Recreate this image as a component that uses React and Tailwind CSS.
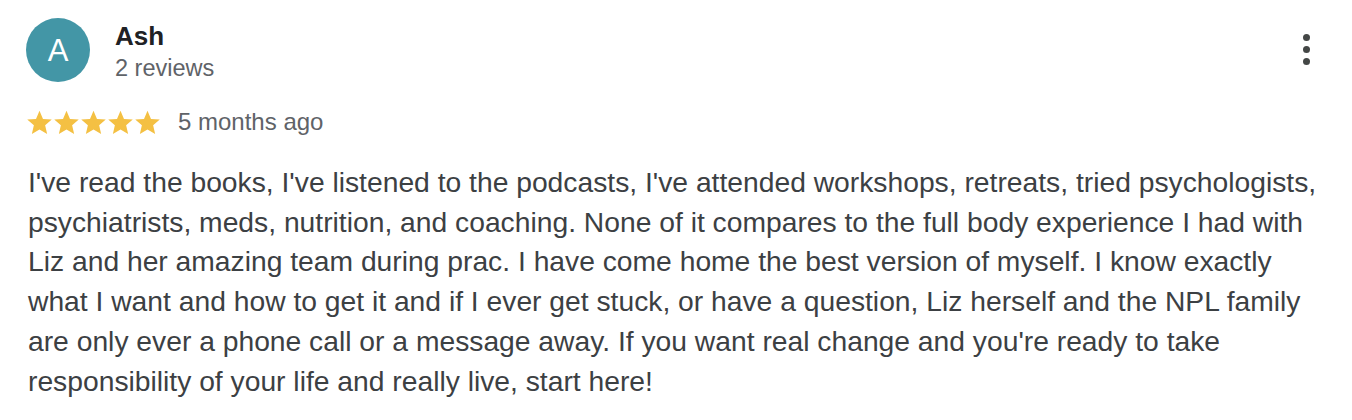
import React from 'react';

const Star = () => (
  <svg width="27" height="27" viewBox="0 0 24 24" className="fill-[#f4c043]">
    <path d="M12 1.6l3.1 7.2 7.8.6-5.9 5.1 1.8 7.7L12 18.2l-6.8 4 1.8-7.7-5.9-5.1 7.8-.6z" />
  </svg>
);

export default function App() {
  const body =
    "I've read the books, I've listened to the podcasts, I've attended workshops, retreats, tried psychologists, psychiatrists, meds, nutrition, and coaching. None of it compares to the full body experience I had with Liz and her amazing team during prac. I have come home the best version of myself. I know exactly what I want and how to get it and if I ever get stuck, or have a question, Liz herself and the NPL family are only ever a phone call or a message away. If you want real change and you're ready to take responsibility of your life and really live, start here!";

  return (
    <div className="w-[1352px] h-[420px] bg-white font-['Liberation_Sans',Arial,sans-serif] overflow-hidden">
      <div className="pl-[26px] pr-[24px] pt-[18px]">
        {/* header */}
        <div className="flex items-start">
          <div className="w-[64px] h-[64px] rounded-full bg-[#4396a6] flex items-center justify-center text-white text-[31px] leading-none">
            A
          </div>
          <div className="ml-[25px] pt-[3px] flex flex-col">
            <span className="text-[26px] font-bold text-[#202124] leading-[30px]">Ash</span>
            <span className="text-[23.5px] text-[#5f6368] leading-[30px] mt-[2px]">2 reviews</span>
          </div>
          <div className="ml-auto mt-[16px] mr-[18px] flex flex-col gap-[5px]">
            <span className="w-[7px] h-[7px] rounded-full bg-[#444746]" />
            <span className="w-[7px] h-[7px] rounded-full bg-[#444746]" />
            <span className="w-[7px] h-[7px] rounded-full bg-[#444746]" />
          </div>
        </div>

        {/* rating */}
        <div className="flex items-center mt-[21px]">
          <div className="flex">
            <Star />
            <Star />
            <Star />
            <Star />
            <Star />
          </div>
          <span className="ml-[17px] text-[24px] text-[#5f6368]">5 months ago</span>
        </div>

        {/* body */}
        <p className="mt-[23px] text-[28.25px] leading-[39.7px] text-[#3c4043] pl-[2px] w-[1296px]">
          {body}
        </p>
      </div>
    </div>
  );
}
